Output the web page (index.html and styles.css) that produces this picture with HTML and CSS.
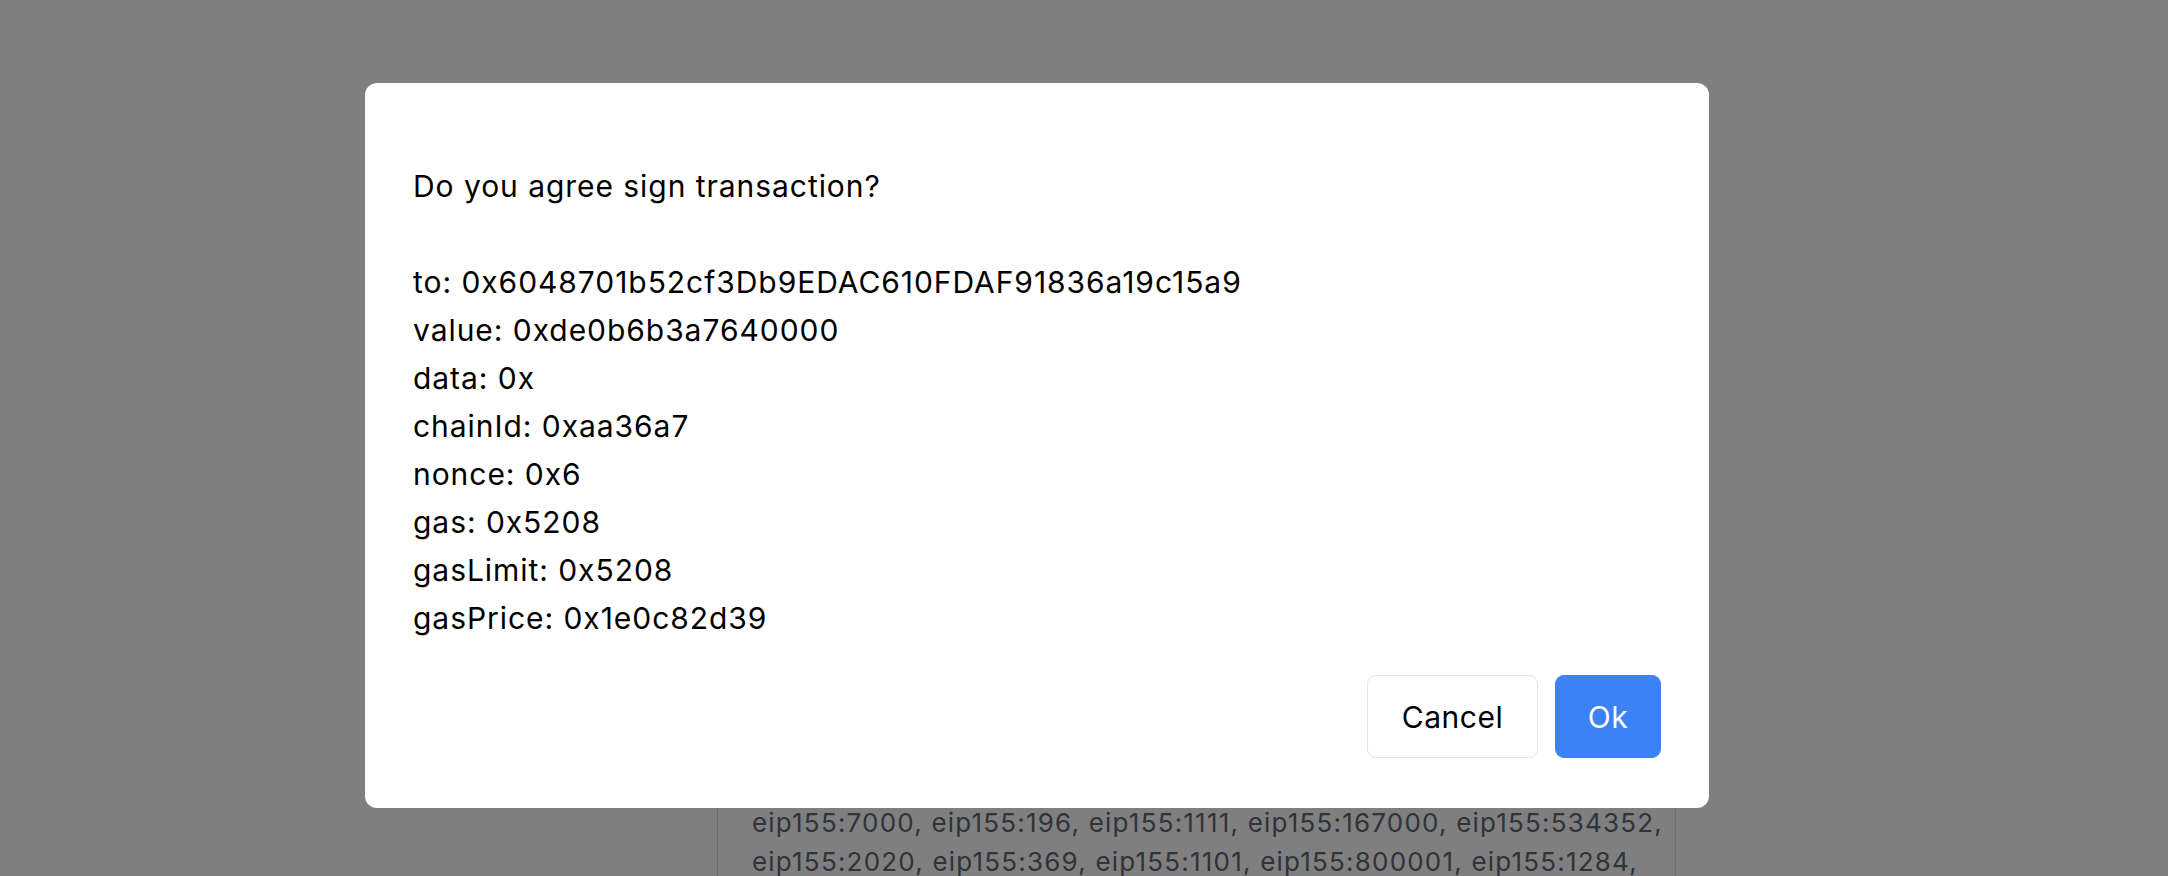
FILE: index.html
```html
<!DOCTYPE html>
<html lang="en">
<head>
<meta charset="utf-8">
<title>Sign transaction</title>
<link rel="stylesheet" href="styles.css">
</head>
<body>
<main class="page">
  <section class="card">
    <p class="chains">eip155:1, eip155:10, eip155:56, eip155:137, eip155:250, eip155:8453,<br>eip155:7000, eip155:196, eip155:1111, eip155:167000, eip155:534352,<br>eip155:2020, eip155:369, eip155:1101, eip155:800001, eip155:1284,</p>
  </section>
</main>
<div class="overlay">
  <div class="modal">
    <div class="message">
      <p class="line">Do you agree sign transaction?</p>
      <p class="line blank">&nbsp;</p>
      <p class="line">to: 0x6048701b52cf3Db9EDAC610FDAF91836a19c15a9</p>
      <p class="line">value: 0xde0b6b3a7640000</p>
      <p class="line">data: 0x</p>
      <p class="line">chainId: 0xaa36a7</p>
      <p class="line">nonce: 0x6</p>
      <p class="line">gas: 0x5208</p>
      <p class="line">gasLimit: 0x5208</p>
      <p class="line">gasPrice: 0x1e0c82d39</p>
    </div>
    <div class="actions">
      <button class="btn btn-cancel">Cancel</button>
      <button class="btn btn-ok">Ok</button>
    </div>
  </div>
</div>
</body>
</html>
```

FILE: styles.css
```css
html, body {
  margin: 0;
  padding: 0;
  height: 100%;
  overflow: hidden;
  background: #ffffff;
  font-family: Inter, "Noto Sans", sans-serif;
}

.page {
  display: flex;
  padding-left: 717px;
  padding-top: 743px;
}

.card {
  width: 959px;
  box-sizing: border-box;
  border: 1px solid #dcdde0;
  border-radius: 8px;
  padding: 20px 20px 60px 34px;
  background: #ffffff;
}

.chains {
  margin: 0;
  font-size: 26px;
  line-height: 39px;
  letter-spacing: 1.2px;
  color: #5f6675;
  white-space: nowrap;
}

.overlay {
  position: fixed;
  inset: 0;
  background: rgba(0, 0, 0, 0.5);
  display: flex;
  align-items: flex-start;
  padding: 83px 0 0 365px;
}

.modal {
  width: 1344px;
  box-sizing: border-box;
  background: #ffffff;
  border-radius: 12px;
  padding: 79px 48px 50px 48px;
  display: flex;
  flex-direction: column;
}

.message {
  color: #000000;
  font-size: 30px;
  line-height: 48px;
  letter-spacing: 0.95px;
}

.line {
  margin: 0;
}

.actions {
  display: flex;
  justify-content: flex-end;
  gap: 17px;
  margin-top: 33px;
}

.btn {
  font-family: Inter, "Noto Sans", sans-serif;
  font-size: 30px;
  letter-spacing: 0.5px;
  height: 83px;
  padding: 0;
  border-radius: 9px;
  border: 1px solid #e5e5ea;
  text-align: center;
  cursor: pointer;
}

.btn-cancel {
  width: 171px;
  background: #ffffff;
  color: #000000;
}

.btn-ok {
  width: 106px;
  background: #3b82f6;
  border-color: #3b82f6;
  color: #ffffff;
}
```
